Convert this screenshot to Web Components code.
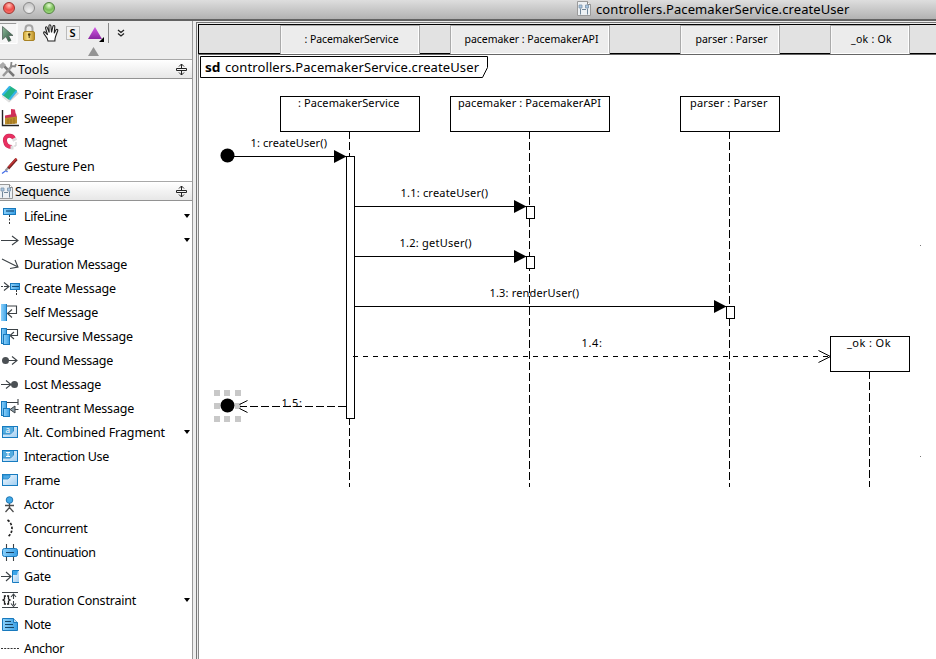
<!DOCTYPE html>
<html lang="en"><head><meta charset="utf-8"><title>controllers.PacemakerService.createUser</title>
<style>html,body{margin:0;height:100%;overflow:hidden;background:#fff}body{font-family:"Noto Sans","Open Sans",sans-serif;color:#000}</style></head>
<body><app-window></app-window>
<script>
const define = (name, html, setup) => customElements.define(name, class extends HTMLElement {
  connectedCallback() {
    if (this.shadowRoot) return;
    const t = document.createElement('template');
    t.innerHTML = html;
    this.attachShadow({mode:'open'}).append(t.content.cloneNode(true));
    if (setup) setup.call(this, this.shadowRoot);
  }
});

/* Label whose tracking is adjusted so that it takes up the given width */
define('fit-text', `<style>:host{display:inline-block;white-space:pre;flex:none}</style><span><slot></slot></span>`, function () {
  const w = +this.getAttribute('w'), n = this.textContent.length;
  const natural = this.getBoundingClientRect().width;
  if (w && natural) this.style.letterSpacing = ((w - natural) / n).toFixed(3) + 'px';
});

const B = 'fill="url(#b)" stroke="#1879bd"', K = 'fill="none" stroke="#3c4246" stroke-width="1.1"';
const frameBase = '<rect x="1.500" y="3.500" width="15" height="11" fill="url(#c)" stroke="#167bc0"/>';
const frameTab = '<path d="M2 4h10v4l-3 3H2z" fill="#55acdf"/><path d="M12.500 4v4l-3 3H2" fill="none" stroke="#2d8bc9"/>';
const icons = {
  eraser:'<path d="M2 12.500l6 5 10-9-3-3z" fill="#aaa" opacity=".5"/><path d="M1 10l8-9 7 4.500-8 9.500z" fill="#22b486"/><path d="M1.500 10l7.500-8.500M15.500 6l-7 8.500" stroke="#35b4e8" stroke-width="2"/><path d="M1 10l7 5v2l-7-5z" fill="#e4e4e4"/>',
  sweeper:'<path d="M1.500 1v15.500H18" fill="none" stroke="#222" stroke-width="1.400"/><path d="M10 0l4 .5 1 7H10z" fill="#d52f59"/><path d="M4 6.500l11-2 1 4-12 1z" fill="#cb3157"/><path d="M4 9l12-1.500v7L4 15.500z" fill="#b98b2b"/><path d="M7 10v5M10 10v5M13 9v6" stroke="#8f6819" stroke-width=".8"/>',
  magnet:'<path d="M13 5.500C11 1 3 2 4 8c.5 4 3 6 7 6" fill="none" stroke="#c2305a" stroke-width="4"/><path d="M13 5.500C11 1 3 2 4 8c.5 4 3 6 7 6" fill="none" stroke="#ea2f61" stroke-width="3"/><path d="M11.500 7.500l4-2M11 12.500v4" stroke="#ddd" stroke-width="3"/><path d="M15 9v4h-2" fill="none" stroke="#ccc"/>',
  pen:'<path d="M1 16.500l4-3 1.500 1.500" fill="none" stroke="#426dea" stroke-width="1.300"/><path d="M7 11.500L15.500 2" stroke="#762323" stroke-width="3"/><path d="M7.500 10L15.500 1.500" stroke="#c93636" stroke-width="1.300"/><path d="M4.500 13.500l2.500-2.500" stroke="#999" stroke-width="2"/>',
  life:`<rect x="2.500" y="1.500" width="12" height="6" ${B}/><path d="M5 4h8" stroke="#164e7b" stroke-width="1.200"/><path d="M8.500 8v10" stroke="#333" stroke-dasharray="2 1.500"/>`,
  msg:`<path d="M0 9.500h17M11 5l6 4.500-6 4.500" ${K}/>`,
  dur:`<path d="M1 4l16 8M9 13.500l8-1.500-3-7" ${K}/>`,
  create:`<path d="M0 7.500h2M3 3.500l5 4-5 4M3 7.500h5" ${K}/><rect x="9.500" y="4.500" width="9" height="6" ${B}/><path d="M11 7.500h7" stroke="#174d77"/><path d="M15.500 11v6" stroke="#333" stroke-dasharray="2 1"/>`,
  self:`<rect x="0" y="1" width="6" height="17" fill="url(#b)"/><path d="M5.500 1v17" stroke="#1879bd"/><path d="M6 3h9.500v7.500H7M11 6.500l-4.500 4 4.500 4" ${K}/>`,
  rec:`<path d="M6 2.500h10.500v6H10M13 5l-4 3.500 4 3.500" ${K}/><rect x=".500" y="1.500" width="5" height="15" ${B}/><rect x="2.500" y="7.500" width="6" height="10" ${B}/>`,
  found:`<path d="M6 9.500h10M11 5.500l5 4-5 4" ${K}/><circle cx="4.500" cy="9.500" r="3.500" fill="#4b5054"/>`,
  lost:`<path d="M0 9.500h9M5 5.500l5 4-5 4" ${K}/><circle cx="13.500" cy="9.500" r="3.500" fill="#4b5054"/>`,
  reen:`<path d="M5 3.500h12M17 0v6M17.500 10.500H13" ${K}/><path d="M9 10.500l5-3.500v7z" fill="#8fa0aa" stroke="#3c4246"/><rect x=".500" y="2.500" width="5" height="14" ${B}/><rect x="2.500" y="9.500" width="6" height="8" ${B}/>`,
  alt:frameBase+frameTab+'<text x="4.500" y="10" font-size="8" fill="#fff">a</text>',
  use:frameBase+frameTab+'<path d="M5 5.500h4M7 5.500v4M5 9.500h4" stroke="#fff"/>',
  frame:frameBase+'<path d="M2 4h7v2l-2 2H2z" fill="#4ca8e5" stroke="#278ac8" stroke-width=".800"/>',
  actor:'<path d="M8.500 8v5M4 10.500h9M8.500 12.500l-4 4.500M8.500 12.500l4 4.500" fill="none" stroke="#4c4c4c" stroke-width="1.300"/><circle cx="8.500" cy="5" r="3.300" fill="#41a9e8" stroke="#2478b3"/>',
  conc:'<path d="M6.500 1c6 4 6 13 0 17" fill="none" stroke="#222" stroke-width="1.700" stroke-dasharray="2.500 1.500"/>',
  cont:`<path d="M5.500 1v17M12.500 1v17" ${K}/><rect x="1.500" y="5.500" width="15" height="8" rx="2" ${B}/><path d="M5 9.500h8" stroke="#1a4467"/>`,
  gate:`<path d="M0 9.500h10M5 5l5 4.500-5 4.500" ${K}/><path d="M18 3.500h-6.500v12H18" fill="url(#c)" stroke="#167bc0"/><path d="M12 4h5l-1 4h-4z" fill="#3ca5e8"/>`,
  dc:`<path d="M1 1.500h16M1 16.500h16M12.500 4v4M12.500 10v4M10 6l2.500-3L15 6M10 12.500l2.500 3 2.500-3" ${K}/><path d="M5 5H3.500v3l-1.500 1 1.500 1v3H5M6 5h1.500v3L9 9l-1.500 1v3H6" fill="none" stroke="#222" stroke-width="1.300"/>`,
  note:`<path d="M1.500 3.500h11l4 4v8h-15z" ${B}/><path d="M12.500 3.500v4h4" fill="#b9def5" stroke="#1879bd"/><path d="M4 6.500h6M4 9.500h8M4 12.500h9" stroke="#174465"/>`,
  anchor:'<path d="M0 9.500h18" stroke="#333" stroke-dasharray="2 1.200"/>',
  tools:'<path d="M3 4l12 12" stroke="#777" stroke-width="2.500"/><path d="M13 6L4 16" stroke="#999" stroke-width="2.500"/><path d="M12.500 2l-.5 4 4 .5 1-2.500" fill="none" stroke="#888" stroke-width="1.800"/><path d="M-1 6l5-4 3 3-4 4z" fill="#aaa"/>',
  doc:'<path d="M.500 2.500h10l3 3v11H.500z" fill="#edf1f4" stroke="#9a9a9a"/><path d="M10.500 2.500v3h3" fill="#fff" stroke="#888"/><path d="M2 6h3v3H2zM8.500 6h3v3h-3z" fill="#a8c6e2" stroke="#7d95ab" stroke-width=".800"/><path d="M3.500 9.500v6M10.500 9.500v6M5 10.500h4" stroke="#71879a"/>'
};
define('tool-icon', `<style>:host{display:block;width:19px;height:19px;flex:none}svg{display:block;overflow:hidden}</style>`, function (r) {
  r.innerHTML += `<svg width="19" height="19" viewBox="0 0 19 19"><defs><linearGradient id="b" x2="1"><stop stop-color="#8bd0fa"/><stop offset="1" stop-color="#3a9fe4"/></linearGradient><linearGradient id="c" x2="1" y2="1"><stop stop-color="#f5faff"/><stop offset="1" stop-color="#9fcdf0"/></linearGradient></defs>${icons[this.getAttribute('name')]}</svg>`;
});

define('title-bar', `<style>
:host{display:flex;height:21px;box-sizing:border-box;border-bottom:2px solid #626262;background:linear-gradient(#dedede,#b2b2b2);align-items:center;font-size:13px}
.lights{display:flex;gap:8px;padding-left:3px;width:573px;box-sizing:border-box;margin-top:-3px}
i{width:10px;height:10px;border-radius:50%;border:1px solid #8b8b8b;background:radial-gradient(circle at 50% 80%,#f1f1f1,#bcbcbc)}
i.r{border-color:#a0322f;background:radial-gradient(circle at 50% 25%,#ffb3aa 5%,#ee4c48 50%,#ff8b80)}
i.g{border-color:#538241;background:radial-gradient(circle at 50% 25%,#d9f6c4 5%,#79bd58 50%,#b6ef96)}
tool-icon{margin:-2px 0 0 4px}fit-text{line-height:18px;margin-top:-2px}</style>
<div class="lights"><i class="r"></i><i></i><i class="g"></i></div><tool-icon name="doc"></tool-icon><fit-text w="253.500">controllers.PacemakerService.createUser</fit-text>`);

define('tool-bar', `<style>:host{display:block;height:38px;background:#ededed}svg{display:block}</style>
<svg width="192" height="38" viewBox="0 21 192 38"><defs><linearGradient id="g" x2="1" y2="1"><stop stop-color="#8fbb9c"/><stop offset="1" stop-color="#234e35"/></linearGradient><linearGradient id="y" x2="1"><stop stop-color="#d1a638"/><stop offset=".4" stop-color="#f6df86"/><stop offset="1" stop-color="#b98a1f"/></linearGradient><linearGradient id="p" x2="0" y2="1"><stop stop-color="#d45ae5"/><stop offset="1" stop-color="#8926a1"/></linearGradient></defs>
<path d="M0 23.500h17.500v20H0z" fill="#f6f6f6"/><path d="M0 23.500h16.500" stroke="#999"/><path d="M17 23v20.500H0" fill="none" stroke="#fff"/>
<path d="M2.500 26.500v13l3.500-3 2.500 5 2.500-1-2.500-5h4.500z" fill="url(#g)" stroke="#53635a" stroke-width=".800"/>
<path d="M25.500 32v-3.500c0-4.500 7-4.500 7 0V32" fill="none" stroke="#a5a5a5" stroke-width="2"/><rect x="23.500" y="31.500" width="11" height="9" rx="1.500" fill="url(#y)" stroke="#a88224"/><circle cx="29.200" cy="34.500" r="1.300" fill="#4b3910"/><path d="M29.200 34v4" stroke="#4b3910"/>
<path d="M48 41c-.5-4-3-5-4.200-7.500-.6-2 1-2.200 2-.5l1.800 2-2.100-7c0-1.600 1.500-1.700 2 0l1.700 4.500-.3-6.500c.1-1.700 1.800-1.700 2 0l.6 6.500 1.400-6c.5-1.500 2-1.200 1.900.3l-.6 6.500 1.800-3.500c1-1.200 2.200-.3 1.700 1l-2.200 6c-.5 1.500-.6 3-.6 4.200z" fill="#fff" stroke="#222" stroke-width="1.100"/>
<rect x="66.500" y="26.500" width="13" height="13" fill="#f1f1f1" stroke="#bbb"/><text x="69.500" y="37" font-size="11" font-weight="600" font-family="Noto Sans,sans-serif">S</text>
<path d="M95 27l7 12H88z" fill="url(#p)"/><path d="M104 37v5h-5z"/><path d="M108.500 23v20" stroke="#888"/><path d="M93.500 47l5.500 9H88z" fill="#949494"/><path d="M118 30l3 2.500 3-2.500M118 33.500l3 2.500 3-2.500" fill="none" stroke="#222" stroke-width="1.300"/></svg>`);

define('panel-header', `<style>:host{display:flex;height:20px;box-sizing:border-box;border-top:1px solid #a8a8a8;border-bottom:1px solid #929292;background:linear-gradient(#fff,#e7e7e7);align-items:center;font-size:12.500px;line-height:18px}
tool-icon{margin-left:-1px}:host([icon=doc]) tool-icon{width:16px}slot{display:block;padding-top:2px}svg{margin-left:auto;margin-right:4px}</style><slot></slot>
<svg width="13" height="13" viewBox="0 0 13 13" fill="none" stroke="#222"><path d="M1.500 5.500h10v2h-10zM6.500 5V1M4 3.500L6.500 1 9 3.500M6.500 8v4M4 9.500L6.500 12 9 9.500"/></svg>`, function (r) {
  const i = document.createElement('tool-icon'); i.setAttribute('name', this.getAttribute('icon')); r.querySelector('slot').before(i);
});

define('tool-item', `<style>:host{display:flex;height:24px;align-items:center;font-size:12.500px;line-height:24px}tool-icon{margin:0 4px 1px 1px}b{display:none;margin-left:auto;margin-right:2px;border:3px solid transparent;border-top:4px solid #000;border-bottom:0;margin-bottom:2px}:host([more]) b{display:block}</style><slot></slot><b></b>`, function (r) {
  const i = document.createElement('tool-icon'); i.setAttribute('name', this.getAttribute('icon')); r.querySelector('slot').before(i);
});
const item = (icon, text, end, more) => `<tool-item icon="${icon}"${more ? ' more' : ''}><fit-text w="${end - 24}">${text}</fit-text></tool-item>`;
define('side-bar', `<style>:host{display:block;width:192px;background:#fff;border-right:1px solid #999;flex:none}section{padding-top:4px}.t{height:98px}</style>
<tool-bar></tool-bar>
<panel-header icon="tools"><fit-text w="31">Tools</fit-text></panel-header><section class="t">
${item('eraser','Point Eraser',93)}${item('sweeper','Sweeper',73)}${item('magnet','Magnet',67)}${item('pen','Gesture Pen',94.5)}</section>
<panel-header icon="doc"><fit-text w="55">Sequence</fit-text></panel-header><section>
${item('life','LifeLine',67,1)}${item('msg','Message',74,1)}${item('dur','Duration Message',127)}${item('create','Create Message',116)}${item('self','Self Message',98)}${item('rec','Recursive Message',133)}${item('found','Found Message',113)}${item('lost','Lost Message',101)}${item('reen','Reentrant Message',134)}${item('alt','Alt. Combined Fragment',165,1)}${item('use','Interaction Use',109)}${item('frame','Frame',60)}${item('actor','Actor',54)}${item('conc','Concurrent',87.5)}${item('cont','Continuation',95.5)}${item('gate','Gate',51)}${item('dc','Duration Constraint',136,1)}${item('note','Note',51)}${item('anchor','Anchor',64)}</section>`);

define('lifeline-tab', `<style>:host{box-sizing:border-box;background:#ececec;border:1px solid #aaa;border-width:1px 1px 0 1px;box-shadow:inset -1px -1px #fff,inset 1px 0 #f8f8f8;display:flex;align-items:center;justify-content:center;font-size:10.500px;line-height:14px;height:29px;padding:0 0 2px 3px}</style><slot></slot>`);
define('lifeline-strip', `<style>:host{display:grid;grid-template-columns:81px 140px 30px 160px 70px 100px 50px 80px 26px;box-sizing:border-box;height:30px;background:#e2e2e2;border:1px solid #000;border-right:0}lifeline-tab:nth-of-type(1){grid-column:2}lifeline-tab:nth-of-type(2){grid-column:4}lifeline-tab:nth-of-type(3){grid-column:6}lifeline-tab:nth-of-type(4){grid-column:8}</style>
<lifeline-tab><fit-text w="94">: PacemakerService</fit-text></lifeline-tab><lifeline-tab><fit-text w="134">pacemaker : PacemakerAPI</fit-text></lifeline-tab><lifeline-tab><fit-text w="72">parser : Parser</fit-text></lifeline-tab><lifeline-tab><fit-text w="41">_ok : Ok</fit-text></lifeline-tab>`);

const T = (x, y, w, s, size = 11) => `<text x="${x}" y="${y}" font-size="${size}" textLength="${w}">${s}</text>`;
const arrow = (x1, x2, y) => `<path class="l" d="M${x1} ${y}.500H${x2}"/><path d="M${x2 - 12} ${y - 6}l12.500 6.500-12.500 6.500z"/>`;
const sq = [];
for (const y of [390, 403, 416]) for (const x of [214, 224, 235]) sq.push(`<rect x="${x}" y="${y}" width="6" height="6" fill="#c8c8c8"/>`);
define('sequence-diagram', `<style>:host{display:block;flex:1;background:#fff}svg{display:block;font-family:"Noto Sans","Open Sans",sans-serif}.l{stroke:#000;fill:none}.d{stroke-dasharray:8 3}.w{fill:#fff;stroke:#000}</style>
<svg width="737" height="604" viewBox="199 55 737 604">
<path class="w" d="M200.500 56.500h287v11l-5 10h-282z"/><text x="205" y="72" font-size="13" font-weight="700" textLength="15.500" lengthAdjust="spacingAndGlyphs">sd</text>${T(225,72,254,'controllers.PacemakerService.createUser',13)}
<path class="l d" d="M349.500 131v356M529.500 131v356M729.500 131v356M869.500 371v116"/>
<rect class="w" x="280.500" y="96.500" width="139" height="35"/><rect class="w" x="450.500" y="96.500" width="159" height="35"/><rect class="w" x="680.500" y="96.500" width="99" height="35"/><rect class="w" x="830.500" y="336.500" width="79" height="35"/>
${T(298,107,101.500,': PacemakerService')}${T(458,107,143,'pacemaker : PacemakerAPI')}${T(690,107,77.500,'parser : Parser')}${T(847,347,43.500,'_ok : Ok')}
<rect class="w" x="346.500" y="156.500" width="8" height="262"/><rect class="w" x="526.500" y="206.500" width="8" height="12"/><rect class="w" x="526.500" y="256.500" width="8" height="12"/><rect class="w" x="726.500" y="306.500" width="8" height="12"/>
${arrow(228,346,156)}${arrow(355,526,206)}${arrow(355,526,256)}${arrow(355,726,306)}
<circle cx="227.500" cy="155.500" r="7"/>
<path class="l" stroke-dasharray="5 5" d="M353 356.500h477"/><path class="l" d="M818.500 350.500l12 6-12 6"/>
${sq.join('')}<circle cx="227.500" cy="405.500" r="7"/><path class="l d" d="M346 406.500H240"/><path class="l" d="M247.500 400.500l-8 4M239.500 408.500l8 4"/>
${T(250.500,147,76.500,'1: createUser()')}${T(400.500,197,87.500,'1.1: createUser()')}${T(399.500,247,72,'1.2: getUser()')}${T(489.500,297,89.500,'1.3: renderUser()')}${T(581.500,347,20.500,'1.4:')}${T(281.500,407,20.500,'1.5:')}
<path d="M920 245h1v1h-1zM920 456h1v1h-1z" fill="#777"/></svg>`);

define('app-window', `<style>:host{display:flex;flex-direction:column;width:936px;height:659px;overflow:hidden;background:#ededed}main{display:flex;flex:1;min-height:0}.editor{display:flex;flex-direction:column;flex:1;margin:1px 0 0 3px;border-top:1px solid #777;border-left:1px solid #777;padding:1px 0 0 1px;min-width:0}.editor sequence-diagram{border-top:1px solid #666;border-left:1px solid #888;margin-left:0}</style>
<title-bar></title-bar><main><side-bar></side-bar><div class="editor"><lifeline-strip></lifeline-strip><sequence-diagram></sequence-diagram></div></main>`);
</script></body></html>
